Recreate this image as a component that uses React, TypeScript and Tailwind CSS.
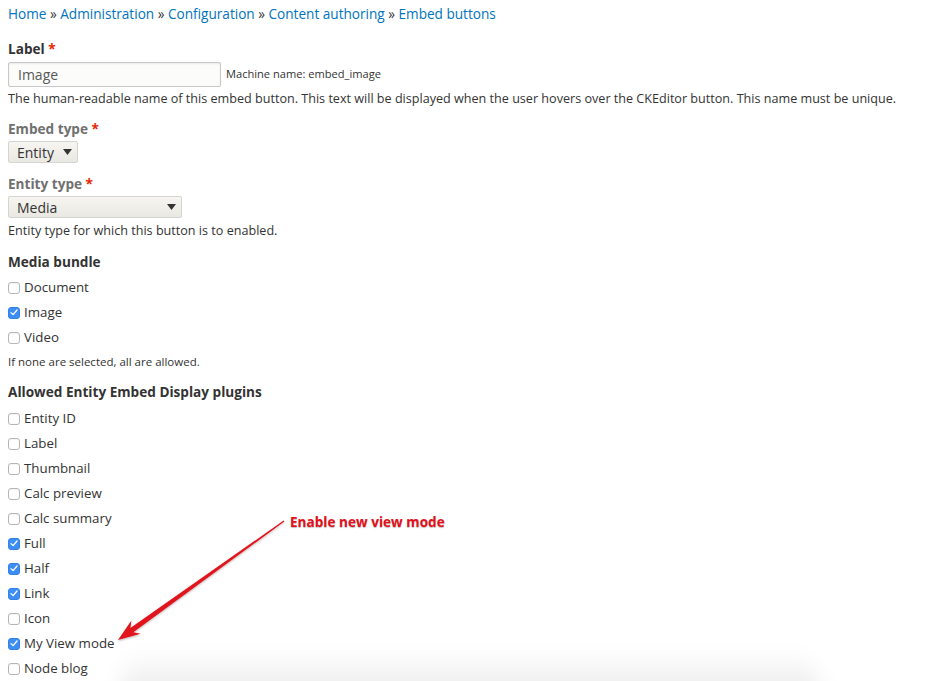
import React from "react";

const font = { fontFamily: '"Open Sans", "Noto Sans", sans-serif' };

function Checkbox({ checked }: { checked: boolean }) {
  return checked ? (
    <span className="inline-flex items-center justify-center w-[12px] h-[12px] rounded-[3px] bg-[#3d8ef4] border border-[#3582e6]">
      <svg width="8" height="7" viewBox="0 0 8 7">
        <path d="M1 3.6 L3.1 5.6 L7 1" stroke="white" strokeWidth="1.3" fill="none" strokeLinecap="round" strokeLinejoin="round" />
      </svg>
    </span>
  ) : (
    <span className="inline-block w-[12px] h-[12px] rounded-[3px] bg-white border border-[#b5b5b5] shadow-[inset_0_1px_1px_rgba(0,0,0,0.05)]" />
  );
}

function Row({ label, checked }: { label: string; checked?: boolean }) {
  return (
    <div className="h-[25px] flex items-center gap-[4px]">
      <Checkbox checked={!!checked} />
      <span className="text-[13.3px] text-[#333]">{label}</span>
    </div>
  );
}

function Caret() {
  return (
    <svg width="9" height="6" viewBox="0 0 9 6">
      <path d="M0 0 H9 L4.5 6 Z" fill="#333" />
    </svg>
  );
}

export default function App() {
  const crumbs = ["Home", "Administration", "Configuration", "Content authoring", "Embed buttons"];
  const plugins: [string, boolean][] = [
    ["Entity ID", false],
    ["Label", false],
    ["Thumbnail", false],
    ["Calc preview", false],
    ["Calc summary", false],
    ["Full", true],
    ["Half", true],
    ["Link", true],
    ["Icon", false],
    ["My View mode", true],
    ["Node blog", false],
  ];
  return (
    <div className="relative w-full h-[681px] overflow-hidden bg-white" style={font}>
      <div className="px-2 pt-1 text-[#333]">
        <div className="h-5 leading-5 text-[13.6px] text-[#0074bd]">
          {crumbs.map((c, i) => (
            <span key={c}>
              {i > 0 && <span className="text-[#333]"> » </span>}
              <span>{c}</span>
            </span>
          ))}
        </div>

        <div className="mt-[15px] h-5 leading-5 text-[13.6px] font-bold text-[#333]">
          Label <span className="text-[#e62600]">*</span>
        </div>
        <div className="mt-[3px] flex items-center">
          <div className="w-[213px] h-[25px] border border-[#c8c8c8] rounded-[2px] bg-[#fcfcfa] shadow-[inset_0_1px_2px_rgba(0,0,0,0.08)] flex items-center pl-[9px] text-[14px] text-[#595959]">
            Image
          </div>
          <span className="ml-[5px] text-[11.1px] text-[#333]">Machine name: embed_image</span>
        </div>
        <div className="mt-[4px] h-4 leading-4 text-[12.6px] text-[#333] whitespace-nowrap">
          The human-readable name of this embed button. This text will be displayed when the user hovers over the CKEditor button. This name must be unique.
        </div>

        <div className="mt-3 h-5 leading-5 text-[13.6px] font-bold text-[#707070]">
          Embed type <span className="text-[#e62600]">*</span>
        </div>
        <div className="mt-[2px] w-[70px] h-[22px] border border-[#d4d4d0] rounded-[2px] bg-gradient-to-b from-[#f6f5f1] to-[#e9e8e2] flex items-center justify-between pl-[8px] pr-[5px] text-[14px] text-[#333]">
          <span>Entity</span>
          <Caret />
        </div>

        <div className="mt-[11px] h-5 leading-5 text-[13.6px] font-bold text-[#707070]">
          Entity type <span className="text-[#e62600]">*</span>
        </div>
        <div className="mt-[2px] w-[174px] h-[22px] border border-[#d4d4d0] rounded-[2px] bg-gradient-to-b from-[#f6f5f1] to-[#e9e8e2] flex items-center justify-between pl-[8px] pr-[5px] text-[14px] text-[#333]">
          <span>Media</span>
          <Caret />
        </div>
        <div className="mt-[5px] h-4 leading-4 text-[12.6px] text-[#333]">
          Entity type for which this button is to enabled.
        </div>

        <div className="mt-[13px] h-5 leading-5 text-[13.6px] font-bold text-[#333]">Media bundle</div>
        <div className="mt-[3px]">
          <Row label="Document" />
          <Row label="Image" checked />
          <Row label="Video" />
        </div>
        <div className="mt-[4px] h-4 leading-4 text-[11.5px] text-[#333]">If none are selected, all are allowed.</div>

        <div className="mt-3 h-5 leading-5 text-[13.6px] font-bold text-[#333]">Allowed Entity Embed Display plugins</div>
        <div className="mt-[4px]">
          {plugins.map(([l, c]) => (
            <Row key={l} label={l} checked={c} />
          ))}
        </div>
      </div>

      {/* bottom shadow */}
      <div className="absolute left-[120px] w-[700px] top-[650px] h-[50px] bg-gradient-to-b from-[rgba(0,0,0,0)] to-[rgba(0,0,0,0.09)] blur-[10px] rounded-t-[40px]" />

      {/* annotation */}
      <div className="absolute left-[290px] top-[512px] text-[13.6px] font-bold text-[#e3101b] leading-5 [text-shadow:0_1px_1px_rgba(0,0,0,0.25)]">
        Enable new view mode
      </div>
      <svg className="absolute left-0 top-0" width="942" height="681" viewBox="0 0 942 681">
        <defs>
          <filter id="sh" x="-10%" y="-10%" width="120%" height="120%">
            <feDropShadow dx="0" dy="1" stdDeviation="0.8" floodColor="#000" floodOpacity="0.3" />
          </filter>
        </defs>
        <polygon
          filter="url(#sh)"
          fill="#e0141f"
          points="118,640 140.6,633.8 133.3,632.2 284.35,521.5 283.65,520.5 130.4,628.1 131.3,620.7"
        />
      </svg>
    </div>
  );
}
